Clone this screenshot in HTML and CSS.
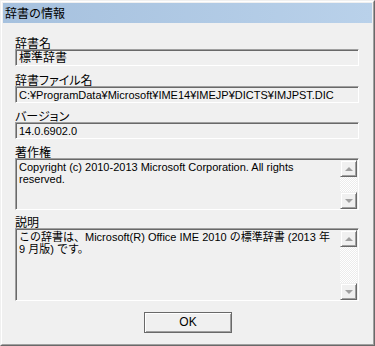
FILE: index.html
```html
<!DOCTYPE html>
<html>
<head>
    <meta charset="utf-8">
    <title>辞書の情報</title>
    <link rel="stylesheet" href="styles.css">
</head>
<body>

    <div class="window">
        <div class="frame">
            <div class="titlebar">辞書の情報</div>

            <div class="content">
                <div class="group">
                    <div class="label">辞書名</div>
                    <div class="field jp">標準辞書</div>
                </div>
                <div class="group gap7">
                    <div class="label">辞書ファイル名</div>
                    <div class="field">C:¥ProgramData¥Microsoft¥IME14¥IMEJP¥DICTS¥IMJPST.DIC</div>
                </div>
                <div class="group gap6">
                    <div class="label">バージョン</div>
                    <div class="field">14.0.6902.0</div>
                </div>
                <div class="group gap6">
                    <div class="label">著作権</div>
                    <div class="memo memo-short">
                        <div class="memo-text">Copyright (c) 2010-2013 Microsoft Corporation. All rights reserved.</div>
                        <div class="scrollbar">
                            <div class="sb-button"><span class="arrow up"></span></div>
                            <div class="sb-track"></div>
                            <div class="sb-button"><span class="arrow down"></span></div>
                        </div>
                    </div>
                </div>
                <div class="group gap5">
                    <div class="label">説明</div>
                    <div class="memo memo-tall">
                        <div class="memo-text">この辞書は、Microsoft(R) Office IME 2010 の標準辞書 (2013 年 9 月版) です。</div>
                        <div class="scrollbar">
                            <div class="sb-button"><span class="arrow up"></span></div>
                            <div class="sb-track"></div>
                            <div class="sb-button"><span class="arrow down"></span></div>
                        </div>
                    </div>
                </div>

                <div class="buttons">
                    <div class="button">OK</div>
                </div>
            </div>
        </div>
    </div>

</body>
</html>
```

FILE: styles.css
```css
/* Page */
body {
    margin: 0;
    padding: 0;
    background: #f0f0f0;
    font-family: "Liberation Sans", "Noto Sans CJK JP", sans-serif;
    font-size: 12px;
    color: #000;
}

/* Window frame */
.window {
    width: 375px;
    height: 346px;
    box-sizing: border-box;
    border: 1px solid;
    border-color: #f0f0f0 #696969 #696969 #f0f0f0;
    background: #f0f0f0;
}

.frame {
    height: 100%;
    box-sizing: border-box;
    border: 1px solid;
    border-color: #fff #a0a0a0 #a0a0a0 #fff;
    padding: 1px;
    display: flex;
    flex-direction: column;
}

.titlebar {
    height: 20px;
    line-height: 20px;
    padding-left: 2px;
    background: linear-gradient(to right, #a6c1de, #b9d1ea);
    font-family: "Noto Sans CJK JP", sans-serif;
    font-size: 12px;
}

/* Dialog contents */
.content {
    flex: 1;
    display: flex;
    flex-direction: column;
    padding: 13px 13px 10px 12px;
}

.group {
    display: flex;
    flex-direction: column;
}

.gap7 { margin-top: 7px; }
.gap6 { margin-top: 6px; }
.gap5 { margin-top: 5px; }

.label {
    height: 13px;
    line-height: 13px;
    font-family: "Noto Sans CJK JP", sans-serif;
    font-feature-settings: "palt";
}

.field,
.memo {
    box-sizing: border-box;
    border: 1px solid;
    border-color: #a0a0a0 #fff #fff #a0a0a0;
    box-shadow: inset 1px 1px 0 #696969;
}

.field {
    height: 17px;
    line-height: 14px;
    padding: 1px 2px 0 3px;
    font-size: 11px;
    white-space: nowrap;
    overflow: hidden;
}

.field.jp {
    font-size: 12px;
}

.memo {
    display: flex;
    padding: 1px 1px 0 1px;
}

.memo-short { height: 52px; }
.memo-tall { height: 73px; }

.memo-text {
    flex: 1;
    padding: 1px 1px 0 2px;
    font-size: 11px;
    line-height: 12px;
}

/* Scroll bar */
.scrollbar {
    width: 17px;
    display: flex;
    flex-direction: column;
}

.sb-button {
    height: 17px;
    box-sizing: border-box;
    border: 1px solid;
    border-color: #f0f0f0 #696969 #696969 #f0f0f0;
    box-shadow: inset 1px 1px 0 #fff, inset -1px -1px 0 #a0a0a0;
    background: #f0f0f0;
    display: flex;
    align-items: center;
    justify-content: center;
}

.sb-track {
    flex: 1;
    background-color: #f4f4f4;
    background-image: repeating-conic-gradient(#ffffff 0 25%, #ececec 0 50%);
    background-size: 2px 2px;
}

.arrow {
    width: 0;
    height: 0;
    border-left: 4px solid transparent;
    border-right: 4px solid transparent;
}

.arrow.up { border-bottom: 4px solid #a0a0a0; }
.arrow.down { border-top: 4px solid #a0a0a0; }

/* Buttons */
.buttons {
    margin-top: 11px;
    display: flex;
    justify-content: center;
    padding-left: 2px;
}

.button {
    width: 88px;
    height: 21px;
    box-sizing: border-box;
    border: 1px solid #696969;
    box-shadow: inset 1px 1px 0 #fff, inset -1px -1px 0 #a0a0a0;
    background: #f0f0f0;
    text-align: center;
    line-height: 19px;
}
```
